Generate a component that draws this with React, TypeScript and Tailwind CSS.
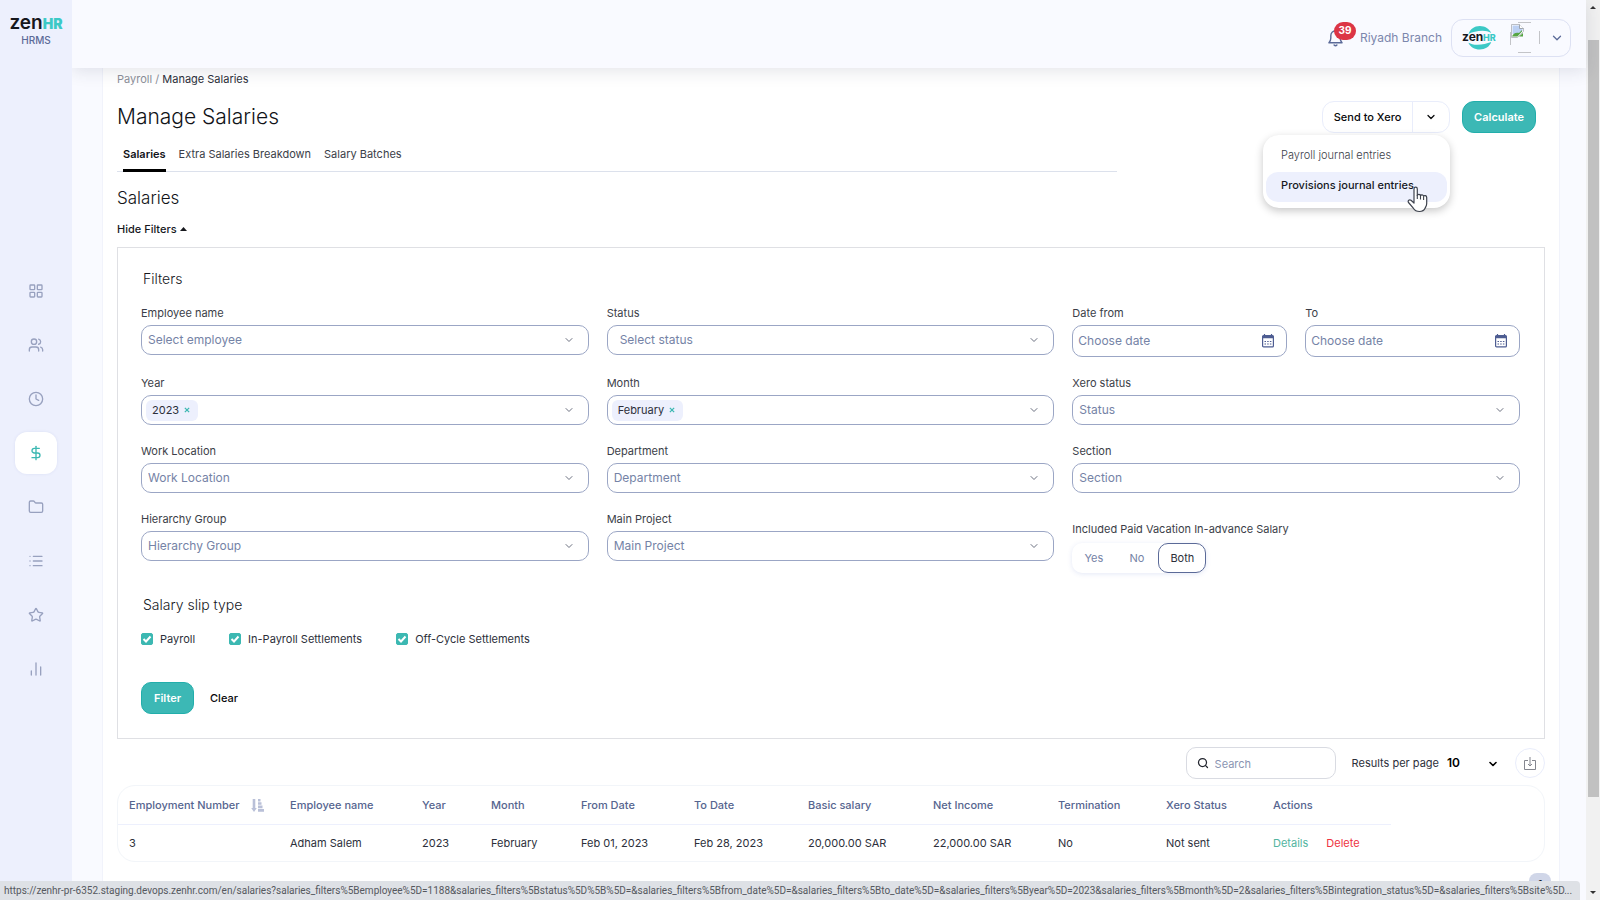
import { useState, type ReactNode } from "react";
import {
  ChartNoAxesColumn,
  ChevronDown,
  Clock,
  DollarSign,
  Folder,
  LayoutGrid,
  List,
  Search,
  Star,
  Users,
} from "lucide-react";

const navItems = [
  { label: "Dashboard", icon: LayoutGrid },
  { label: "Employees", icon: Users },
  { label: "Attendance", icon: Clock },
  { label: "Payroll", icon: DollarSign, active: true },
  { label: "Documents", icon: Folder },
  { label: "Requests", icon: List },
  { label: "Performance", icon: Star },
  { label: "Reports", icon: ChartNoAxesColumn },
];

const tabs = ["Salaries", "Extra Salaries Breakdown", "Salary Batches"];

const columns = [
  { name: "Employment Number", width: "w-[172px]" },
  { name: "Employee name", width: "w-[132px]" },
  { name: "Year", width: "w-[69px]" },
  { name: "Month", width: "w-[90px]" },
  { name: "From Date", width: "w-[113px]" },
  { name: "To Date", width: "w-[114px]" },
  { name: "Basic salary", width: "w-[125px]" },
  { name: "Net Income", width: "w-[125px]" },
  { name: "Termination", width: "w-[108px]" },
  { name: "Xero Status", width: "w-[107px]" },
  { name: "Actions", width: "w-[118px]" },
];

const salaries = [
  ["3", "Adham Salem", "2023", "February", "Feb 01, 2023", "Feb 28, 2023", "20,000.00 SAR", "22,000.00 SAR", "No", "Not sent"],
];

const statusUrl =
  "https://zenhr-pr-6352.staging.devops.zenhr.com/en/salaries?salaries_filters%5Bemployee%5D=1188&salaries_filters%5Bstatus%5D%5B%5D=&salaries_filters%5Bfrom_date%5D=&salaries_filters%5Bto_date%5D=&salaries_filters%5Byear%5D=2023&salaries_filters%5Bmonth%5D=2&salaries_filters%5Bintegration_status%5D=&salaries_filters%5Bsite%5D...";

function Sidebar() {
  return (
    <aside className="z-20 flex w-[72px] shrink-0 flex-col items-center bg-[#edf0fd]">
      <a href="#" className="flex h-7 items-baseline pt-[13px] leading-none">
        <span className="text-[19px] font-semibold text-[#16181d]">zen</span>
        <span className="text-sm font-black text-[#3cc9c6]">HR</span>
      </a>
      <span className="mt-1.5 text-[10px] leading-3 font-medium text-[#5b6a98]">
        HRMS
      </span>
      <nav className="mt-[224px] flex flex-col gap-3">
        {navItems.map(({ label, icon: Icon, active }) => (
          <a
            key={label}
            href="#"
            aria-label={label}
            className={
              active
                ? "flex size-[42px] items-center justify-center rounded-xl bg-white text-[#3cb8b2] shadow-[0_0_3px_rgba(90,110,180,0.12)]"
                : "flex size-[42px] items-center justify-center text-[#98a1bf]"
            }
          >
            <Icon className="size-4" strokeWidth={2} />
          </a>
        ))}
      </nav>
    </aside>
  );
}

function CompanyLogo() {
  return (
    <svg width="36" height="26" viewBox="0 0 36 26" aria-label="zenHR">
      <path d="M6.500 9C8 4 12.500 1 17.800 1c5.200 0 9.700 2.800 11.400 7-2.700-1.500-5.700-2.300-9-2.200-5.200.1-9.500 1.200-13.700 3.200Z" fill="#3cc9c6" />
      <path d="M29.200 17c-1.500 4.600-6 7.500-11.400 7.500-5.200 0-9.700-2.700-11.400-6.800 2.700 1.400 5.700 2.100 9 2 5.200-.1 9.500-1 13.800-2.700Z" fill="#3cc9c6" />
      <text x="0" y="16" className="font-['Inter'] text-[12px] font-bold" fill="#16181d">zen</text>
      <text x="21" y="16" className="font-['Inter'] text-[9px] font-extrabold" fill="#3cc9c6">HR</text>
    </svg>
  );
}

function BrokenAvatar() {
  return (
    <svg width="30" height="32" viewBox="0 0 30 32" aria-label="Profile picture">
      <path d="M.5 10v13M29.500 9v13M8 .5h13M8 30.500h13" stroke="#c3c4c8" fill="none" />
      <path d="M1.500 2.500h8l4 4v3l-3 3-3 3h-6z" fill="#fff" stroke="#a9adb5" strokeWidth=".8" />
      <path d="M2.500 3.500h7l3 3.500v2l-4 3h-6z" fill="#bcd0f3" />
      <path d="M2 14.500c1-3 4-4.500 7-3.500l3-3v1.500l-4.500 5z" fill="#56a545" />
      <path d="M9.500 2.500v4h4" fill="#fff" stroke="#8d9299" strokeWidth=".8" />
      <path d="m9 14.500 4-3.500v3.500z" fill="#56a545" />
    </svg>
  );
}

function Header() {
  return (
    <header className="relative z-10 flex h-[68px] shrink-0 items-center justify-end bg-[#f9faff] pr-[15px] text-xs text-[#7c87ad] shadow-[0_3px_16px_rgba(40,50,80,0.13)]">
      <div className="flex items-center pt-2">
        <button type="button" aria-label="39 notifications" className="relative mr-4 h-[18px] w-4">
          <svg width="15" height="18" viewBox="0 0 16 19" fill="none" stroke="#5b6a98" strokeWidth="1.500" strokeLinecap="round" strokeLinejoin="round">
            <path d="M1 14.500h14c-1.600-1.300-2-2.500-2-5V7c0-3-2.200-5-5-5S3 4 3 7v2.500c0 2.500-.4 3.700-2 5ZM6.500 17c.8.800 2.200.8 3 0" />
          </svg>
          <span className="absolute -top-[7px] left-1.5 flex h-[18px] w-[22px] items-center justify-center rounded-full bg-[#dc3545] text-[10px] font-bold text-white">
            39
          </span>
        </button>
        <span>Riyadh Branch</span>
        <button
          type="button"
          aria-label="Account menu"
          className="ml-[9px] flex h-[38px] w-[120px] items-center rounded-xl border border-[#dde1f3] pr-1.5 pl-2.5"
        >
          <CompanyLogo />
          <span className="ml-3">
            <BrokenAvatar />
          </span>
          <ChevronDown className="ml-auto size-3.5 text-[#5b6a98]" strokeWidth={2.2} />
        </button>
      </div>
    </header>
  );
}

function PointerCursor() {
  return (
    <svg className="pointer-events-none absolute right-[18px] -bottom-[11px]" width="22" height="27" viewBox="0 0 22 27">
      <path
        d="M7 16.500V3c0-2.400 3.300-2.400 3.300 0v6.500c.3-1.700 3-1.600 3.200.2.500-1.400 2.900-1.200 3.100.6.700-1.200 3.100-.8 3.100 1.200v6c0 2-.9 3.300-1.500 4.500-.9 2-2.700 3.500-5.700 3.500-3.500 0-5-1.300-6.200-3.300L1.500 16.500c-1-1.800.8-3.300 2.500-2.200L7 17Z"
        fill="#fff"
        stroke="#3d424d"
        strokeWidth="1.200"
        strokeLinejoin="round"
      />
      <path d="M10.300 9v4M13.500 9.700v3.800M16.600 10.500v3.500" stroke="#3d424d" strokeWidth="1.100" />
    </svg>
  );
}

function XeroMenu() {
  return (
    <div className="relative">
      <div className="flex h-8 rounded-xl border border-[#e9edfb] text-[11px] font-medium text-[#08090b]">
        <button type="button" className="w-[90px] border-r border-[#e9edfb]">
          Send to Xero
        </button>
        <button type="button" aria-label="More Xero actions" className="flex w-9 items-center justify-center">
          <ChevronDown className="size-3" strokeWidth={2.5} />
        </button>
      </div>
      <ul className="absolute top-[34px] right-0 w-[187px] rounded-2xl bg-white p-[3px] pb-1.5 text-[11px] shadow-[0_3px_8px_rgba(0,0,0,0.22)]">
        <li>
          <button type="button" className="h-[34px] w-full pl-[15px] text-left font-light text-[#3b3e48]">
            Payroll journal entries
          </button>
        </li>
        <li className="relative">
          <button type="button" className="h-[30px] w-full rounded-xl bg-[#edf0fd] pb-1 pl-[15px] text-left font-medium text-[#16181d]">
            Provisions journal entries
          </button>
          <PointerCursor />
        </li>
      </ul>
    </div>
  );
}

interface FieldProps {
  id: string;
  label: string;
  children: ReactNode;
}

function Field({ id, label, children }: FieldProps) {
  return (
    <div>
      <label htmlFor={id} className="block pb-1 text-[11px] leading-4 text-[#3b3e48]">
        {label}
      </label>
      {children}
    </div>
  );
}

function SelectField({ id, label, placeholder, indent }: { id: string; label: string; placeholder: string; indent?: boolean }) {
  return (
    <Field id={id} label={label}>
      <div className="relative">
        <select
          id={id}
          className={`block h-[30px] w-full appearance-none rounded-[10px] border border-[#9ba6c5] bg-white text-xs text-[#7583a6] ${indent ? "pl-3" : "pl-1.5"}`}
        >
          <option>{placeholder}</option>
        </select>
        <ChevronDown className="pointer-events-none absolute top-[9px] right-[14px] size-3 text-[#6b7080]" />
      </div>
    </Field>
  );
}

function TagField({ id, label, initial }: { id: string; label: string; initial: string }) {
  const [tag, setTag] = useState(initial);

  return (
    <Field id={id} label={label}>
      <div className="flex h-[30px] items-center rounded-[10px] border border-[#9ba6c5] pr-[13px] pl-1">
        {tag && (
          <span className="flex h-[21px] items-center gap-[5px] rounded-md bg-[#edf0fd] pr-2 pl-1.5 text-[11px] text-[#2c2f3a]">
            {tag}
            <button type="button" aria-label={`Remove ${tag}`} onClick={() => setTag("")}>
              <svg width="6" height="6" viewBox="0 0 7 7" stroke="#3cb8b2" strokeWidth="1.500">
                <path d="m1 1 5 5M6 1 1 6" />
              </svg>
            </button>
          </span>
        )}
        <input id={id} type="text" className="min-w-0 flex-1 outline-none" />
        <ChevronDown className="size-3 text-[#6b7080]" />
      </div>
    </Field>
  );
}

function DateField({ id, label }: { id: string; label: string }) {
  return (
    <Field id={id} label={label}>
      <div className="flex h-8 items-center rounded-[10px] border border-[#9ba6c5] pr-3 pl-[5px]">
        <input
          id={id}
          type="text"
          placeholder="Choose date"
          className="min-w-0 flex-1 text-xs outline-none placeholder:text-[#7583a6]"
        />
        <button type="button" aria-label={`Open ${label} calendar`}>
          <svg width="12" height="14" viewBox="0 0 12 14">
            <path d="M2.500 0v2M9.500 0v2" stroke="#4e5d92" strokeWidth="1.200" />
            <rect x=".6" y="1.600" width="10.800" height="11.300" rx="1" fill="none" stroke="#4e5d92" strokeWidth="1.200" />
            <path d="M.6 3h10.800" stroke="#4e5d92" strokeWidth="2.500" />
            <path d="M2.500 7.500h7M2.500 10h7" stroke="#4e5d92" strokeWidth="1" strokeDasharray="1.500 1.200" />
          </svg>
        </button>
      </div>
    </Field>
  );
}

function CheckOption({ label }: { label: string }) {
  return (
    <label className="flex items-center gap-[7px]">
      <span className="relative flex size-3">
        <input
          type="checkbox"
          defaultChecked
          className="peer size-3 appearance-none rounded-xs border border-[#3cb8b2] checked:bg-[#3cb8b2]"
        />
        <svg viewBox="0 0 12 12" className="pointer-events-none absolute inset-0 hidden size-3 peer-checked:block" fill="none" stroke="#fff" strokeWidth="2">
          <path d="m2.500 6 2.500 2.500L9.500 3.500" />
        </svg>
      </span>
      {label}
    </label>
  );
}

function Filters() {
  const [vacation, setVacation] = useState("Both");

  return (
    <form className="mt-2 border border-[#dfe0e4] pt-[21px] pr-6 pb-6 pl-[23px]" onSubmit={(e) => e.preventDefault()}>
      <h3 className="pl-0.5 text-sm leading-5 font-light text-[#16181d]">Filters</h3>
      <div className="mt-4 grid grid-cols-3 gap-[18px]">
        <SelectField id="employee" label="Employee name" placeholder="Select employee" />
        <SelectField id="status" label="Status" placeholder="Select status" indent />
        <div className="grid grid-cols-2 gap-[18px]">
          <DateField id="date-from" label="Date from" />
          <DateField id="date-to" label="To" />
        </div>
        <TagField id="year" label="Year" initial="2023" />
        <TagField id="month" label="Month" initial="February" />
        <SelectField id="xero-status" label="Xero status" placeholder="Status" />
        <SelectField id="work-location" label="Work Location" placeholder="Work Location" />
        <SelectField id="department" label="Department" placeholder="Department" />
        <SelectField id="section" label="Section" placeholder="Section" />
        <SelectField id="hierarchy" label="Hierarchy Group" placeholder="Hierarchy Group" />
        <SelectField id="project" label="Main Project" placeholder="Main Project" />
        <fieldset className="pt-2.5 text-[11px]">
          <legend className="float-left mb-1.5 w-full leading-4 text-[#3b3e48]">
            Included Paid Vacation In-advance Salary
          </legend>
          <div className="clear-both inline-flex h-[30px] rounded-[10px] shadow-[0_1px_5px_rgba(90,110,200,0.16)]">
            {["Yes", "No", "Both"].map((option) => (
              <label
                key={option}
                className={
                  vacation === option
                    ? "flex w-12 items-center justify-center rounded-[10px] border border-[#5b6a98] text-[#2c2f3a]"
                    : "flex w-[43px] items-center justify-center text-[#7583a6]"
                }
              >
                <input
                  type="radio"
                  name="vacation"
                  className="sr-only"
                  checked={vacation === option}
                  onChange={() => setVacation(option)}
                />
                {option}
              </label>
            ))}
          </div>
        </fieldset>
      </div>
      <h3 className="mt-[22px] pl-0.5 text-sm leading-5 font-light text-[#16181d]">Salary slip type</h3>
      <div className="mt-[14px] flex h-5 gap-[34px] text-[11px] text-[#2c2f3a]">
        <CheckOption label="Payroll" />
        <CheckOption label="In-Payroll Settlements" />
        <CheckOption label="Off-Cycle Settlements" />
      </div>
      <div className="mt-[33px] flex h-8 text-[11px]">
        <button type="submit" className="rounded-[10px] border border-[#22aeab] bg-[#3cb8b5] px-3 font-semibold text-white">
          Filter
        </button>
        <button type="reset" className="ml-4 font-medium text-[#08090b]">
          Clear
        </button>
      </div>
    </form>
  );
}

function Toolbar() {
  return (
    <div className="mt-2 flex h-8 items-center justify-end text-[11px] text-[#2c2f3a]">
      <div className="flex h-8 w-[150px] items-center gap-1.5 rounded-[10px] border border-[#d9dbe2] px-2.5">
        <Search className="size-3 shrink-0 text-[#22252e]" strokeWidth={2.500} />
        <input
          type="search"
          aria-label="Search"
          placeholder="Search"
          className="min-w-0 flex-1 pt-0.5 outline-none placeholder:text-[#8a95b2]"
        />
      </div>
      <label htmlFor="per-page" className="ml-4">
        Results per page
      </label>
      <span className="relative ml-2">
        <select id="per-page" className="block w-[52px] appearance-none text-xs font-semibold text-black">
          <option>10</option>
        </select>
        <ChevronDown className="pointer-events-none absolute top-[3px] right-0 size-3 text-black" strokeWidth={3.200} />
      </span>
      <button
        type="button"
        aria-label="Export"
        className="ml-4 flex size-[30px] items-center justify-center rounded-full border border-[#e9edfb]"
      >
        <svg width="12" height="13" viewBox="0 0 12 13" fill="none" stroke="#84868f">
          <path d="M4 3.500H.5v9h11v-9H8M6 0v9M4 7l2 2 2-2" />
        </svg>
      </button>
    </div>
  );
}

function SalariesTable() {
  return (
    <div className="mt-1.5 rounded-[18px] border border-[#f2f5f9]">
      <table className="table-fixed text-left text-[11px]">
        <thead>
          <tr className="h-[38px] border-b border-[#edf0fd] text-[#56658f]">
            {columns.map((column, i) => (
              <th key={column.name} className={`${column.width} font-medium whitespace-nowrap ${i === 0 ? "pl-[11px]" : ""}`}>
                {column.name}
                {i === 0 && (
                  <svg className="ml-3 inline-block" width="13" height="13" viewBox="0 0 13 13" fill="#b9c0d8">
                    <path d="M1.700 0h2.600v9h1.500L3 13 .2 9h1.500zM7 0h2.500v2.500H7zM7 3.300h3.500v2.500H7zM7 6.600h4.500v2.600H7zM7 10h6v2.800H7z" />
                  </svg>
                )}
              </th>
            ))}
          </tr>
        </thead>
        <tbody>
          {salaries.map((row) => (
            <tr key={row[0]} className="h-[37px] text-[#2c2f3a]">
              {row.map((cell, i) => (
                <td key={columns[i].name} className={i === 0 ? "pl-[11px]" : ""}>
                  {cell}
                </td>
              ))}
              <td>
                <a href="#" className="mr-[18px] text-[#52b5a0]">
                  Details
                </a>
                <a href="#" className="text-[#ee3342]">
                  Delete
                </a>
              </td>
            </tr>
          ))}
        </tbody>
      </table>
    </div>
  );
}

function Scrollbar() {
  return (
    <div className="flex w-[14px] shrink-0 flex-col items-center bg-[#f1f1f1]" aria-hidden="true">
      <svg width="14" height="40" viewBox="0 0 14 40">
        <path d="m4 9 3-3 3 3z" fill="#333" />
      </svg>
      <div className="w-[11px] flex-1 bg-[#c1c1c1]" />
      <svg width="14" height="103" viewBox="0 0 14 103">
        <path d="m4 94 3 3 3-3z" fill="#333" />
      </svg>
    </div>
  );
}

export default function App() {
  const [showFilters, setShowFilters] = useState(true);

  return (
    <div className="relative flex h-screen overflow-hidden bg-[#f9faff] font-['Inter',sans-serif]">
      <Sidebar />
      <div className="flex min-w-0 flex-1 flex-col">
        <Header />
        <main className="mr-[26px] ml-[30px] flex-1 border-x border-[#f1f3fb] bg-white px-[14px]">
          <nav aria-label="Breadcrumb" className="pt-px text-[11px] leading-5 text-[#2c2f3a]">
            <a href="#" className="text-[#8d9099]">
              Payroll
            </a>
            <span className="text-[#8d9099]"> / </span>
            <span>Manage Salaries</span>
          </nav>

          <div className="mt-3 flex h-8 items-center justify-between pr-[9px]">
            <h1 className="text-[21px] font-light text-[#111318]">Manage Salaries</h1>
            <div className="flex gap-3">
              <XeroMenu />
              <button type="button" className="h-8 rounded-xl border border-[#22aeab] bg-[#3cb8b5] px-[11px] text-[11px] font-semibold text-white">
                Calculate
              </button>
            </div>
          </div>

          <div className="mt-[11px] flex w-[70%] gap-[13px] border-b border-[#dce1ec] pl-1.5 text-[11px] leading-5">
            {tabs.map((tab, i) => (
              <a
                key={tab}
                href="#"
                className={
                  i === 0
                    ? "-mb-px border-b-3 border-black pb-[5px] font-semibold text-[#111318]"
                    : "pb-[5px] text-[#3b3e48]"
                }
              >
                {tab}
              </a>
            ))}
          </div>

          <h2 className="mt-3 text-[17px] leading-7 font-light text-[#111318]">Salaries</h2>
          <button
            type="button"
            onClick={() => setShowFilters((prev) => !prev)}
            className="mt-[7px] flex items-center gap-[3px] text-[11px] leading-5 font-medium text-[#16181d]"
          >
            {showFilters ? "Hide Filters" : "Show Filters"}
            <svg width="7" height="4" viewBox="0 0 7 4">
              <path d="M3.500 0 7 4H0z" fill="#16181d" />
            </svg>
          </button>

          {showFilters && <Filters />}
          <Toolbar />
          <SalariesTable />
          <div className="mt-[11px] -mr-[6px] flex justify-end">
            <button type="button" className="h-[22px] w-[22px] rounded-lg bg-[#d0d6e8] text-[11px] font-semibold text-[#22252e]">
              1
            </button>
          </div>
        </main>
      </div>
      <Scrollbar />

      <div className="absolute bottom-0 left-0 z-30 flex h-[19px] max-w-full items-center rounded-tr-sm bg-[#dee1e6] pr-2 pl-1 font-['Roboto','Open_Sans',sans-serif] text-[10px] whitespace-nowrap text-[#55585e]">
        {statusUrl}
      </div>
    </div>
  );
}
